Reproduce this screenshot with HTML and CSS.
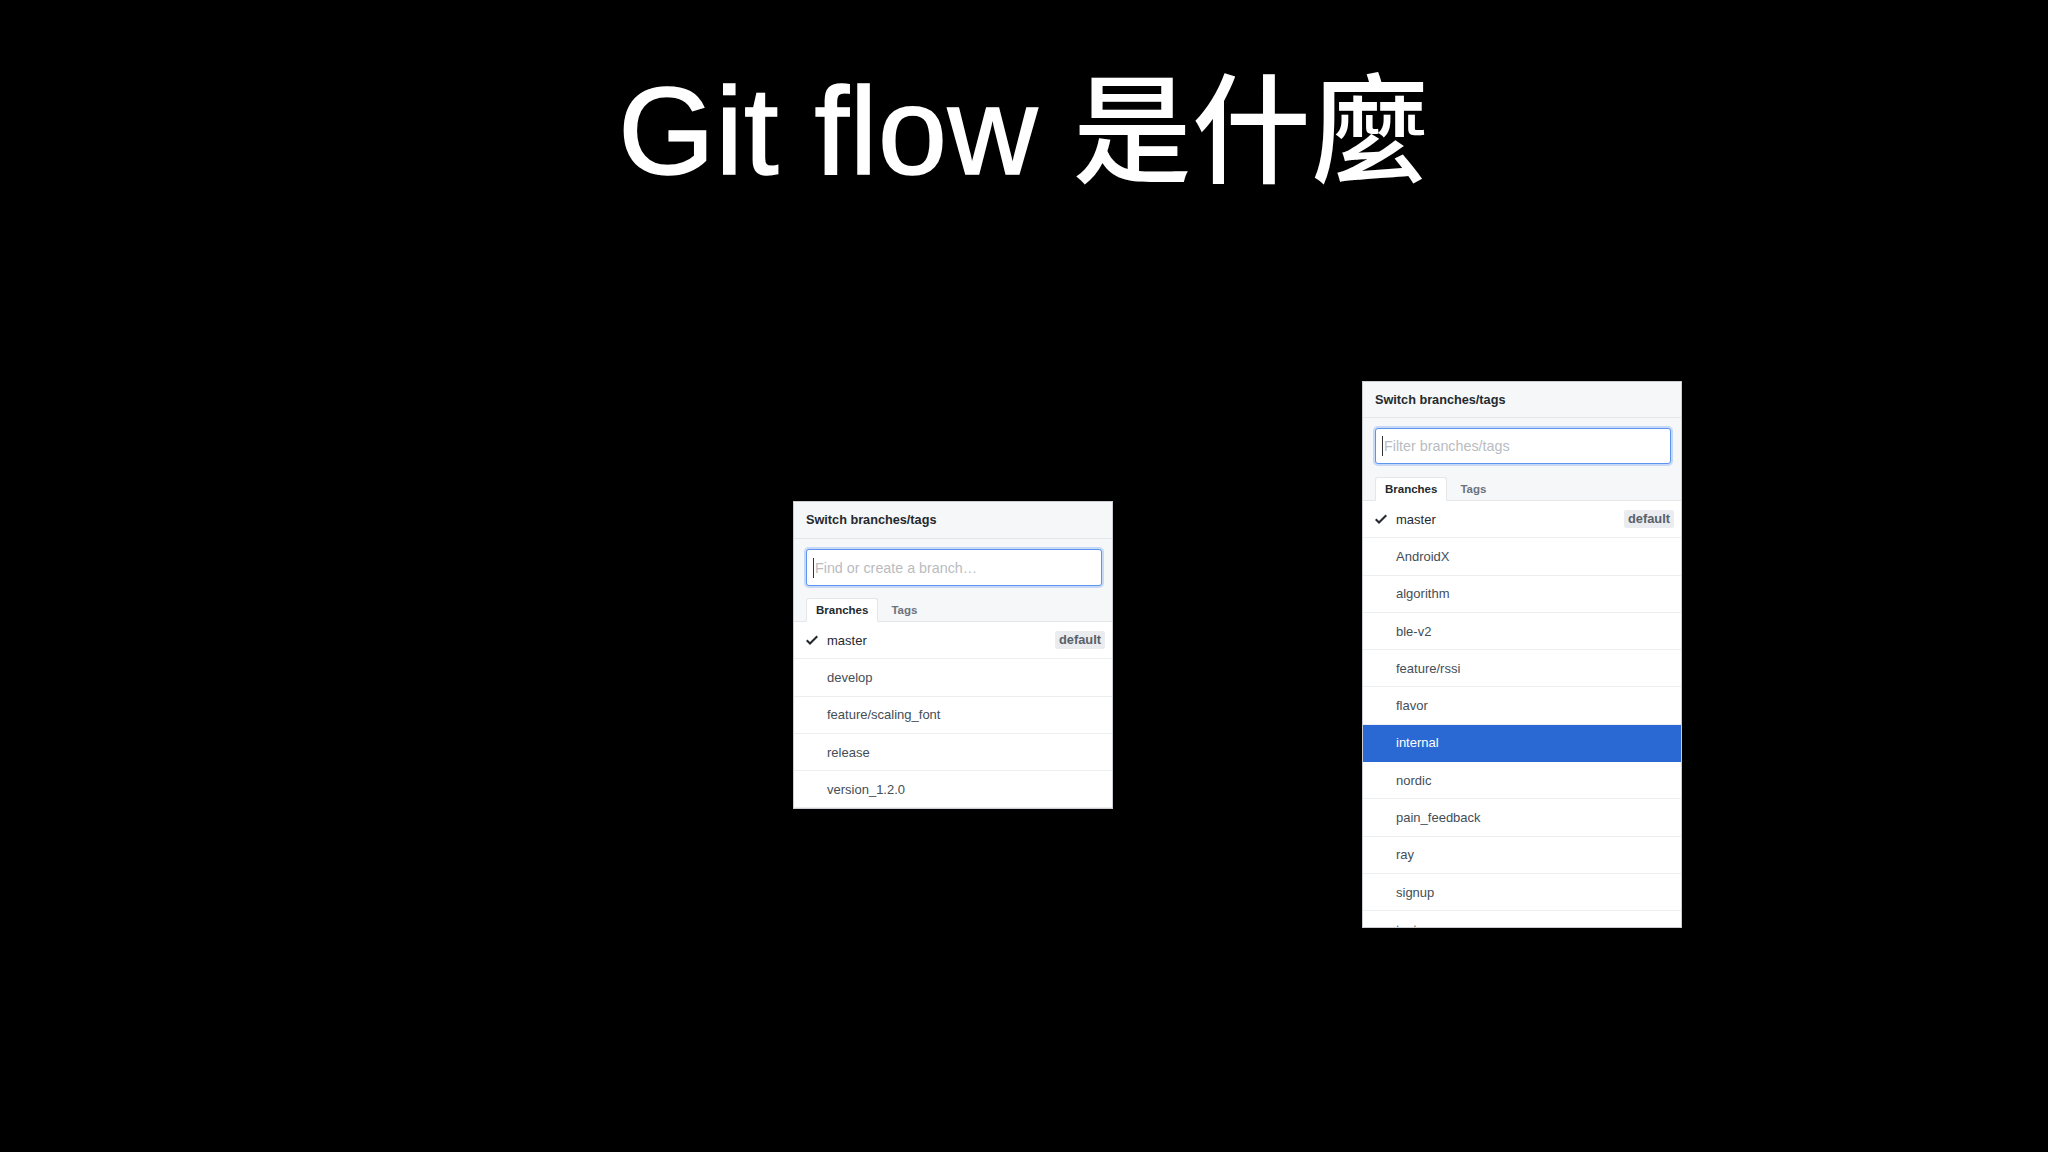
FILE: index.html
```html
<!DOCTYPE html>
<html lang="zh-Hant">
<head>
<meta charset="utf-8">
<title>Git flow 是什麼</title>
<link rel="stylesheet" href="styles.css">
</head>
<body>
<div class="slide">
  <h1 class="title"><span class="latin">Git flow</span> <span class="cjk">是什麼</span></h1>
  <div class="stage">
    <div class="menu menu-left">
      <div class="menu-header">Switch branches/tags</div>
      <div class="menu-filter">
        <div class="filter-input"><span class="caret"></span><span class="placeholder">Find or create a branch…</span></div>
      </div>
      <div class="menu-tabs">
        <span class="tab active">Branches</span>
        <span class="tab">Tags</span>
      </div>
      <div class="menu-list">
        <div class="item selected">
          <span class="check"><svg width="12" height="16" viewBox="0 0 12 16"><path d="M12 5l-8 8-4-4 1.5-1.5L4 10l6.5-6.5L12 5z" fill="#24292e"/></svg></span>
          <span class="name">master</span>
          <span class="badge">default</span>
        </div>
        <div class="item"><span class="check"></span><span class="name">develop</span></div>
        <div class="item"><span class="check"></span><span class="name">feature/scaling_font</span></div>
        <div class="item"><span class="check"></span><span class="name">release</span></div>
        <div class="item"><span class="check"></span><span class="name">version_1.2.0</span></div>
      </div>
    </div>

    <div class="menu menu-right">
      <div class="menu-header">Switch branches/tags</div>
      <div class="menu-filter">
        <div class="filter-input"><span class="caret"></span><span class="placeholder">Filter branches/tags</span></div>
      </div>
      <div class="menu-tabs">
        <span class="tab active">Branches</span>
        <span class="tab">Tags</span>
      </div>
      <div class="menu-list">
        <div class="item selected">
          <span class="check"><svg width="12" height="16" viewBox="0 0 12 16"><path d="M12 5l-8 8-4-4 1.5-1.5L4 10l6.5-6.5L12 5z" fill="#24292e"/></svg></span>
          <span class="name">master</span>
          <span class="badge">default</span>
        </div>
        <div class="item"><span class="check"></span><span class="name">AndroidX</span></div>
        <div class="item"><span class="check"></span><span class="name">algorithm</span></div>
        <div class="item"><span class="check"></span><span class="name">ble-v2</span></div>
        <div class="item"><span class="check"></span><span class="name">feature/rssi</span></div>
        <div class="item"><span class="check"></span><span class="name">flavor</span></div>
        <div class="item hover"><span class="check"></span><span class="name">internal</span></div>
        <div class="item"><span class="check"></span><span class="name">nordic</span></div>
        <div class="item"><span class="check"></span><span class="name">pain_feedback</span></div>
        <div class="item"><span class="check"></span><span class="name">ray</span></div>
        <div class="item"><span class="check"></span><span class="name">signup</span></div>
        <div class="item"><span class="check"></span><span class="name">test</span></div>
      </div>
    </div>
  </div>
</div>
</body>
</html>
```
FILE: styles.css
```css
html, body {
  margin: 0;
  padding: 0;
  background: #000;
}
.slide {
  width: 2048px;
  height: 1152px;
  overflow: hidden;
  background: #000;
  font-family: "Liberation Sans", Arial, "Noto Sans CJK TC", sans-serif;
}
.title {
  margin: 69px 0 0 0;
  color: #fff;
  font-family: "Liberation Sans", Arial, "Noto Sans CJK TC", sans-serif;
  font-weight: 500;
  font-size: 124px;
  line-height: 1;
  height: 124px;
  text-align: center;
}
.latin {
  letter-spacing: 0.8px;
  -webkit-text-stroke: 1.6px #fff;
}
.cjk {
  font-size: 119px;
}
.stage {
  display: flex;
  align-items: flex-start;
  gap: 249px;
  padding-left: 793px;
  margin-top: 188px;
}
.menu {
  width: 320px;
  box-sizing: border-box;
  background: #fff;
  border: 1px solid #c9ccd1;
  overflow: hidden;
}
.menu-left {
  margin-top: 120px;
}
.menu-right {
  height: 547px;
}
.menu-header {
  height: 37px;
  box-sizing: border-box;
  padding-left: 12px;
  display: flex;
  align-items: center;
  background: #f6f7f9;
  border-bottom: 1px solid #e4e6ea;
  color: #24292e;
  font-weight: 700;
  font-size: 12.7px;
}
.menu-right .menu-header {
  height: 36px;
}
.menu-filter {
  background: #f6f7f9;
  padding: 10px 10px 13px 12px;
}
.menu-left .menu-filter {
  padding-bottom: 12px;
}
.filter-input {
  height: 37px;
  box-sizing: border-box;
  border: 1px solid #5b95f0;
  border-radius: 3px;
  box-shadow: 0 0 0 2px rgba(80, 140, 240, 0.28);
  background: #fff;
  display: flex;
  align-items: center;
  padding-left: 6px;
}
.menu-right .filter-input {
  height: 36px;
}
.caret {
  width: 1px;
  height: 20px;
  background: #333;
  margin-right: 1px;
}
.placeholder {
  color: #b8bcc1;
  font-size: 14.3px;
}
.menu-tabs {
  display: flex;
  align-items: flex-end;
  height: 24px;
  box-sizing: border-box;
  background: #f6f7f9;
  padding-left: 12px;
  border-bottom: 1px solid #e4e6ea;
}
.tab {
  height: 24px;
  box-sizing: border-box;
  padding: 0 10px 0 10px;
  display: flex;
  align-items: center;
  font-size: 11.5px;
  font-weight: 700;
  color: #6a737d;
  margin-bottom: -1px;
}
.tab.active {
  background: #fff;
  color: #24292e;
  border: 1px solid #e4e6ea;
  border-bottom: 1px solid #fff;
  border-radius: 3px 3px 0 0;
  padding: 0 9px;
  margin-right: 3px;
}
.menu-list {
  background: #fff;
}
.item {
  height: 37.3px;
  box-sizing: border-box;
  display: flex;
  align-items: center;
  padding: 0 7px 0 12px;
  border-bottom: 1px solid #eceef1;
  color: #444d56;
  font-size: 13px;
}
.item.selected {
  color: #24292e;
}
.item.hover {
  background: #2a69d3;
  color: #fff;
  border-bottom-color: #2a69d3;
}
.check {
  width: 21px;
  flex: none;
  display: flex;
  align-items: center;
}
.name {
  flex: 1;
}
.badge {
  background: #eaecef;
  color: #586069;
  font-weight: 700;
  font-size: 12.8px;
  padding: 2px 4px;
  border-radius: 2px;
  line-height: 14px;
}
```
